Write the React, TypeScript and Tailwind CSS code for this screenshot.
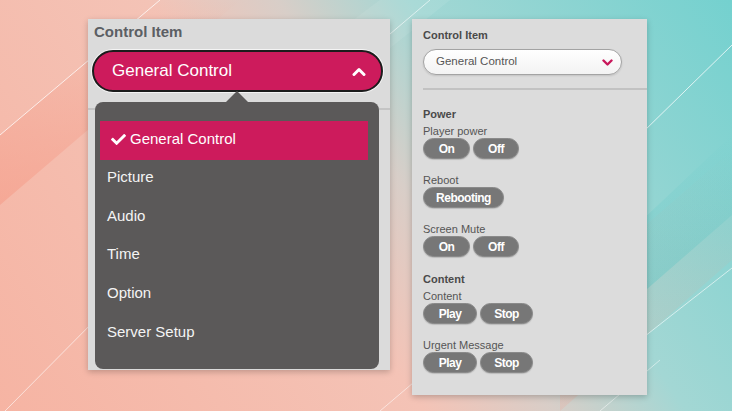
import { FaCheck } from 'react-icons/fa'

const FONT = "font-['Liberation_Sans',Arial,sans-serif]"

const MENU_ITEMS = ['General Control', 'Picture', 'Audio', 'Time', 'Option', 'Server Setup']

type Group = { label: string; buttons: { text: string; w: string }[] }
type Section = { title: string; groups: Group[] }

const SECTIONS: Section[] = [
    {
        title: 'Power',
        groups: [
            { label: 'Player power', buttons: [{ text: 'On', w: 'w-[47px]' }, { text: 'Off', w: 'w-[46px]' }] },
            { label: 'Reboot', buttons: [{ text: 'Rebooting', w: 'w-[81px]' }] },
            { label: 'Screen Mute', buttons: [{ text: 'On', w: 'w-[47px]' }, { text: 'Off', w: 'w-[46px]' }] },
        ],
    },
    {
        title: 'Content',
        groups: [
            { label: 'Content', buttons: [{ text: 'Play', w: 'w-[54px]' }, { text: 'Stop', w: 'w-[53px]' }] },
            { label: 'Urgent Message', buttons: [{ text: 'Play', w: 'w-[54px]' }, { text: 'Stop', w: 'w-[53px]' }] },
        ],
    },
]

function Backdrop() {
    return (
        <svg className="absolute inset-0 w-full h-full" viewBox="0 0 732 411" preserveAspectRatio="none">
            <defs>
                <linearGradient id="bandPink" x1="0" y1="1" x2="0" y2="0">
                    <stop offset="0" stopColor="#f59a86" stopOpacity="0.55" />
                    <stop offset="1" stopColor="#f59a86" stopOpacity="0" />
                </linearGradient>
                <linearGradient id="bandTeal" x1="0" y1="1" x2="0" y2="0">
                    <stop offset="0" stopColor="#3fbfbf" stopOpacity="0.35" />
                    <stop offset="1" stopColor="#3fbfbf" stopOpacity="0" />
                </linearGradient>
            </defs>
            {/* soft diagonal bands */}
            <polygon points="0,205 0,135 160,0 240,0" fill="url(#bandPink)" />
            <polygon points="560,411 560,300 732,150 732,260" fill="url(#bandPink)" opacity="0.35" />
            <polygon points="600,330 600,260 732,135 732,215" fill="url(#bandTeal)" />
            <polygon points="300,120 300,60 380,0 450,0" fill="#ffffff" opacity="0.08" />
            {/* thin light lines */}
            <g stroke="#ffffff" strokeWidth="1" fill="none">
                <line x1="0" y1="135" x2="160" y2="0" opacity="0.75" />
                <line x1="5" y1="411" x2="110" y2="305" opacity="0.6" />
                <line x1="330" y1="85" x2="430" y2="0" opacity="0.6" />
                <line x1="380" y1="411" x2="440" y2="360" opacity="0.55" />
                <line x1="640" y1="135" x2="732" y2="45" opacity="0.75" />
                <line x1="640" y1="340" x2="732" y2="268" opacity="0.6" />
                <line x1="600" y1="411" x2="660" y2="360" opacity="0.5" />
            </g>
        </svg>
    )
}

function ChevronUp() {
    return (
        <svg width="14" height="9" viewBox="0 0 14 9" fill="none">
            <polyline points="2,7.5 7,2.5 12,7.5" stroke="#ffffff" strokeWidth="3" strokeLinecap="round" strokeLinejoin="round" />
        </svg>
    )
}

function ChevronDown() {
    return (
        <svg width="11" height="7" viewBox="0 0 11 7" fill="none">
            <polyline points="1.5,1.5 5.5,5.5 9.5,1.5" stroke="#c8175a" strokeWidth="2.4" strokeLinecap="round" strokeLinejoin="round" />
        </svg>
    )
}

function DropdownPanel() {
    return (
        <div className="relative w-[302px] h-[351px] bg-[#dbdbdb] shadow-[0_2px_6px_rgba(0,0,0,0.22)] pt-[4px]">
            <p className="pl-[6px] text-[15px] leading-[18px] font-bold text-[#5c5f64]">Control Item</p>
            <div className="mt-[9px] ml-[4px] w-[291px] h-[42px] rounded-full border-2 border-[#1c1c1c] bg-[#cd1b5c] shadow-[0_0_0_1px_rgba(255,255,255,0.7)] flex items-center justify-between pl-[18px] pr-[15px]">
                <span className="text-[17px] text-white">General Control</span>
                <ChevronUp />
            </div>
            <div className="mt-[16px] h-[2px] bg-[#c4c4c4]" />

            {/* open menu */}
            <div className="absolute left-[7px] top-[83px] w-[284px] h-[267px] rounded-[8px] bg-[#5b5959] pt-[19px]">
                <div className="absolute left-[131px] -top-[11px] w-0 h-0 border-l-[11px] border-r-[11px] border-b-[11px] border-l-transparent border-r-transparent border-b-[#5b5959]" />
                <ul>
                    {MENU_ITEMS.map((item, i) =>
                        i === 0 ? (
                            <li key={item} className="ml-[5px] mr-[11px] h-[38.6px] bg-[#cd1b5c] flex items-center pl-[10px] pb-[3px] gap-[3px] text-[15px] text-white">
                                <FaCheck className="w-[17px] h-[15px] mt-[2px]" />
                                <span>{item}</span>
                            </li>
                        ) : (
                            <li key={item} className="h-[38.6px] flex items-center pl-[12px] pb-[3px] text-[15px] text-[#f4f4f4]">
                                {item}
                            </li>
                        ),
                    )}
                </ul>
            </div>
        </div>
    )
}

function ControlPanel() {
    return (
        <div className="w-[235px] h-[376px] bg-[#dcdcdc] shadow-[0_2px_6px_rgba(0,0,0,0.22)] pt-[9px] pl-[11px]">
            <p className="text-[11px] leading-[14px] font-bold text-[#4a4a4a]">Control Item</p>
            <div className="mt-[7px] w-[199px] h-[26px] rounded-full border border-[#a3a3a3] bg-gradient-to-b from-white to-[#f3f3f3] shadow-[0_1px_2px_rgba(0,0,0,0.12)] flex items-center justify-between pl-[12px] pr-[8px]">
                <span className="text-[11.5px] text-[#555555]">General Control</span>
                <ChevronDown />
            </div>
            <div className="mt-[13px] h-[2px] bg-[#c2c2c2]" />

            <div className="mt-[17px] flex flex-col gap-[15px]">
                {SECTIONS.map((section) => (
                    <section key={section.title}>
                        <p className="text-[11px] leading-[14px] font-bold text-[#4a4a4a]">{section.title}</p>
                        <div className="mt-[3px] flex flex-col gap-[14px]">
                            {section.groups.map((group) => (
                                <div key={group.label}>
                                    <p className="text-[11px] leading-[14px] text-[#555555]">{group.label}</p>
                                    <div className="flex gap-[3px]">
                                        {group.buttons.map((btn) => (
                                            <button
                                                key={btn.text}
                                                className={`${btn.w} h-[21px] rounded-full bg-[#777777] border border-[#8a8a8a] text-white text-[12px] font-bold tracking-[-0.5px] flex items-center justify-center shadow-[0_1px_1px_rgba(0,0,0,0.15)]`}
                                            >
                                                {btn.text}
                                            </button>
                                        ))}
                                    </div>
                                </div>
                            ))}
                        </div>
                    </section>
                ))}
            </div>
        </div>
    )
}

export default function App() {
    return (
        <div className={`${FONT} relative w-[732px] h-[411px] overflow-hidden bg-[linear-gradient(56deg,#f6b4a3_0%,#f4c3b6_42%,#d8cec8_55%,#a3d7d4_68%,#74d1cf_100%)]`}>
            <Backdrop />
            <div className="relative flex items-start gap-[22px] pl-[88px] pt-[19px]">
                <DropdownPanel />
                <ControlPanel />
            </div>
        </div>
    )
}
